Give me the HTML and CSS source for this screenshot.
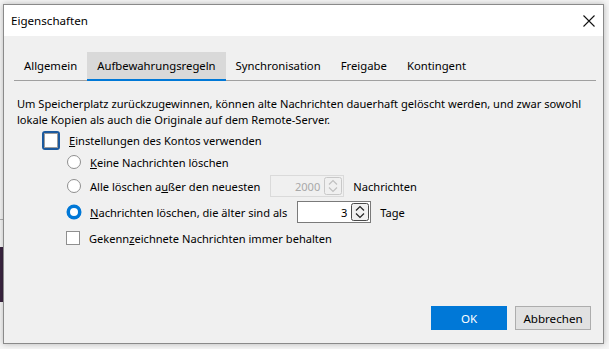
FILE: index.html
```html
<!DOCTYPE html>
<html lang="de">
<head>
    <meta charset="UTF-8">
    <title>Eigenschaften</title>
    <link rel="stylesheet" href="styles.css">
</head>
<body>
    <div class="backdrop">
        <div class="backdrop-line"></div>
        <div class="backdrop-strip"></div>
    </div>

    <div class="dialog">
        <div class="titlebar">
            <span class="title">Eigenschaften</span>
            <svg class="close" width="12" height="12" viewBox="0 0 12 12">
                <path d="M0.5 0.5 L11.5 11.5 M11.5 0.5 L0.5 11.5" stroke="#111" stroke-width="1.1" fill="none"/>
            </svg>
        </div>

        <div class="content">
            <div class="tabs">
                <div class="tab">Allgemein</div>
                <div class="tab active">Aufbewahrungsregeln</div>
                <div class="tab">Synchronisation</div>
                <div class="tab">Freigabe</div>
                <div class="tab">Kontingent</div>
            </div>

            <p class="desc">Um Speicherplatz zurückzugewinnen, können alte Nachrichten dauerhaft gelöscht werden, und zwar sowohl lokale Kopien als auch die Originale auf dem Remote-Server.</p>

            <div class="options">
                <div class="row row-top">
                    <span class="checkbox focused"><span class="box"></span></span>
                    <span class="label"><u>E</u>instellungen des Kontos verwenden</span>
                </div>

                <div class="row sub">
                    <span class="radio"></span>
                    <span class="label"><u>K</u>eine Nachrichten löschen</span>
                </div>

                <div class="row sub tall">
                    <span class="radio"></span>
                    <span class="label">Alle löschen a<u>u</u>ßer den neuesten</span>
                    <div class="spin disabled">
                        <span class="value">2000</span>
                        <svg class="spin-btn" width="18" height="18" viewBox="0 0 18 18">
                            <rect x="0.5" y="0.5" width="17" height="17" rx="2" fill="none" stroke="#c8c8c8"/>
                            <path d="M5 7.5 L9 3.5 L13 7.5 M5 10.5 L9 14.5 L13 10.5" stroke="#c0c0c0" stroke-width="1.2" fill="none"/>
                        </svg>
                    </div>
                    <span class="label after">Nachrichten</span>
                </div>

                <div class="row sub tall">
                    <span class="radio checked"></span>
                    <span class="label"><u>N</u>achrichten löschen, die älter sind als</span>
                    <div class="spin">
                        <span class="value">3</span>
                        <svg class="spin-btn" width="18" height="18" viewBox="0 0 18 18">
                            <rect x="0.5" y="0.5" width="17" height="17" rx="2" fill="#f0f0f0" stroke="#4a4a4a"/>
                            <path d="M5 7.5 L9 3.5 L13 7.5 M5 10.5 L9 14.5 L13 10.5" stroke="#222" stroke-width="1.2" fill="none"/>
                        </svg>
                    </div>
                    <span class="label after">Tage</span>
                </div>

                <div class="row sub tall">
                    <span class="checkbox"><span class="box"></span></span>
                    <span class="label">Gekenn<u>z</u>eichnete Nachrichten immer behalten</span>
                </div>
            </div>

            <div class="footer">
                <button class="btn primary">OK</button>
                <button class="btn">Abbrechen</button>
            </div>
        </div>
    </div>
</body>
</html>
```

FILE: styles.css
```css
body {
    margin: 0;
    width: 609px;
    height: 349px;
    overflow: hidden;
    position: relative;
    background-color: #f5f5f5;
    font-family: "Noto Sans", "Open Sans", sans-serif;
    font-size: 11.1px;
    color: #000;
}
.backdrop {
    position: absolute;
    left: 0;
    top: 0;
    width: 609px;
    height: 349px;
}
.backdrop-line {
    position: absolute;
    left: 0;
    top: 219px;
    width: 3px;
    height: 1px;
    background-color: #b0b0b0;
}
.backdrop-strip {
    position: absolute;
    left: 0;
    top: 247px;
    width: 3px;
    height: 55px;
    background-color: #3a2440;
}
.dialog {
    position: absolute;
    left: 3px;
    top: 4px;
    width: 599px;
    height: 338px;
    border: 1px solid #8a8a8a;
    background-color: #f0f0f0;
    box-shadow: 0 0 6px rgba(0, 0, 0, 0.25);
    display: flex;
    flex-direction: column;
}
.titlebar {
    height: 31px;
    background-color: #fff;
    display: flex;
    align-items: center;
    justify-content: space-between;
    padding: 0 8px 0 7px;
    font-size: 11.6px;
}
.content {
    flex: 1;
    display: flex;
    flex-direction: column;
    padding: 16px 7px 13px 10px;
}
.tabs {
    display: flex;
    height: 28px;
    border-bottom: 1px solid #a0a0a0;
}
.tab {
    padding: 0 10px;
    display: flex;
    align-items: center;
    font-size: 11.3px;
    margin-bottom: -1px;
    border-bottom: 2px solid transparent;
}
.tab.active {
    background-color: #d9d9d9;
    border-bottom-color: #0078d7;
}
.desc {
    margin: 15px 0 0 3px;
    line-height: 16px;
}
.options {
    display: flex;
    flex-direction: column;
    margin-top: 2px;
}
.row {
    display: flex;
    align-items: center;
    height: 22px;
}
.row.tall {
    height: 26px;
}
.row-top {
    padding-left: 28px;
    height: 21px;
}
.row.sub {
    padding-left: 52px;
}
.label {
    margin-left: 9px;
    white-space: nowrap;
}
.checkbox {
    width: 14px;
    height: 14px;
    display: inline-flex;
    align-items: center;
    justify-content: center;
    flex-shrink: 0;
}
.checkbox .box {
    width: 12px;
    height: 12px;
    border: 1px solid #8f8f8f;
    background-color: #fff;
}
.checkbox.focused {
    width: 14px;
    height: 15px;
    border: 2px solid #1c5a9e;
    border-radius: 3px;
}
.checkbox.focused .box {
    width: 12px;
    height: 13px;
    border-color: #9c9c9c;
}
.radio {
    width: 12px;
    height: 12px;
    border: 1px solid #8f8f8f;
    border-radius: 50%;
    background-color: #fff;
    flex-shrink: 0;
    margin-left: 1px;
}
.radio.checked {
    width: 8px;
    height: 8px;
    border: 3px solid #0078d7;
    box-shadow: 0 0 0 0.5px #0078d7;
}
.spin {
    display: flex;
    align-items: center;
    justify-content: flex-end;
    height: 20px;
    width: 71px;
    border: 1px solid #7a7a7a;
    background-color: #fff;
    padding-right: 1px;
    margin-left: 10px;
    flex-shrink: 0;
}
.spin .value {
    margin-right: 4px;
}
.spin.disabled {
    border-color: #dadada;
    background-color: #f0f0f0;
    color: #a8a8a8;
}
.footer {
    margin-top: auto;
    display: flex;
    justify-content: flex-end;
    gap: 8px;
    padding-right: 5px;
}
.btn {
    width: 76px;
    height: 24px;
    font-family: inherit;
    font-size: 11.6px;
    border: 1px solid #adadad;
    background-color: #e1e1e1;
    color: #000;
    padding: 0;
}
.btn.primary {
    background-color: #0078d7;
    border-color: #0078d7;
    color: #fff;
}
```
